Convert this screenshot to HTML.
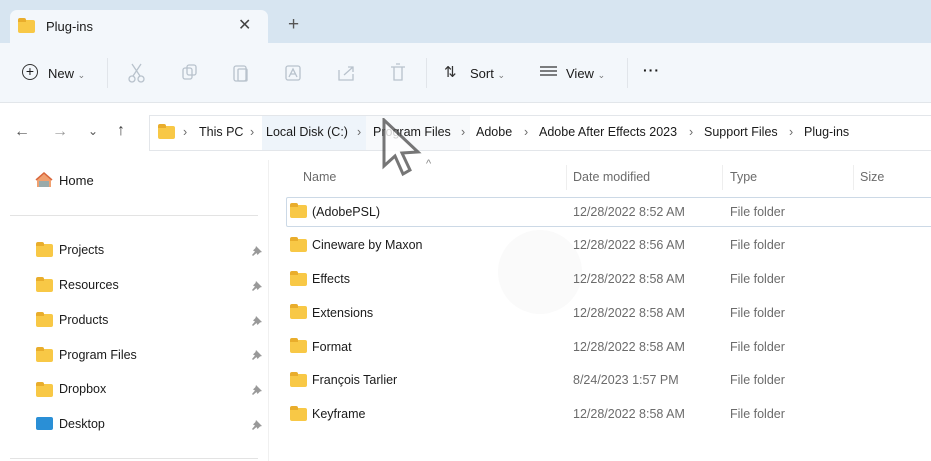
<!DOCTYPE html>
<html><head><meta charset="utf-8"><style>
*{margin:0;padding:0;box-sizing:border-box}
body{width:931px;height:461px;overflow:hidden;background:#fff;font-family:"Liberation Sans",sans-serif;font-size:12.5px;color:#1a1a1a;position:relative}
.a{position:absolute}
.fold{position:absolute;width:17px;height:13px;background:#f8c846;border-radius:2px}
.fold:before{content:"";position:absolute;left:0;top:-2px;width:8px;height:4px;background:#e9ad2c;border-radius:2px 2px 0 0}
.g{color:#6b6b6b}
.pin{position:absolute;left:251px;width:12px;height:12px}
.bc{position:absolute;top:125px}
.ch{position:absolute;top:125px;color:#6b6b6b}
</style></head><body>
<div class="a" style="left:0;top:0;width:931px;height:43px;background:#d7e5f1"></div>
<div class="a" style="left:10px;top:10px;width:258px;height:34px;background:#f3f7fb;border-radius:7px 7px 0 0"></div>
<div class="fold" style="left:18px;top:20px"></div>
<div class="a" style="left:46px;top:19px;font-size:13px">Plug-ins</div>
<div class="a" style="left:238px;top:15px;font-size:16px;color:#444">✕</div>
<div class="a" style="left:288px;top:14px;font-size:19px;color:#555">+</div>
<div class="a" style="left:0;top:43px;width:931px;height:60px;background:#f3f7fb;border-bottom:1px solid #e2e6ea"></div>
<div class="a" style="left:22px;top:64px;width:16px;height:16px;border:1.3px solid #333;border-radius:50%;text-align:center;line-height:13px;font-size:14px">+</div>
<div class="a" style="left:48px;top:66px;font-size:13px">New <span style="font-size:9px;color:#777">⌄</span></div>
<div class="a" style="left:107px;top:58px;width:1px;height:30px;background:#e1e5ea"></div>
<svg class="a" style="left:120px;top:60px" width="300" height="26" fill="none" stroke="#b8c2cc" stroke-width="1.3">
<circle cx="12" cy="19" r="3"/><circle cx="21" cy="19" r="3"/><path d="M13 16 L21 4 M20 16 L12 4"/>
<rect x="63" y="8" width="9" height="11" rx="2"/><rect x="67" y="5" width="9" height="10" rx="2"/>
<rect x="114" y="6" width="12" height="15" rx="2"/><rect x="118" y="9" width="9" height="12" rx="1"/>
<rect x="166" y="6" width="14" height="14" rx="2"/><path d="M169 17 L173 9 L177 17 M170 14 H176"/>
<path d="M219 10 V20 H233 V14 M224 15 L233 7 M228 7 H233 V12"/>
<path d="M271 7 H285 M274 7 V20 H282 V7 M276 4 H280"/>
</svg>
<div class="a" style="left:426px;top:58px;width:1px;height:30px;background:#e1e5ea"></div>
<div class="a" style="left:444px;top:63px;font-size:15px;color:#333">⇅</div>
<div class="a" style="left:470px;top:66px;font-size:13px">Sort <span style="font-size:9px;color:#777">⌄</span></div>
<svg class="a" style="left:540px;top:66px" width="18" height="12" stroke="#333" stroke-width="1.2"><path d="M0 1H17M0 5H17M0 9H17"/></svg>
<div class="a" style="left:566px;top:66px;font-size:13px">View <span style="font-size:9px;color:#777">⌄</span></div>
<div class="a" style="left:627px;top:58px;width:1px;height:30px;background:#e1e5ea"></div>
<div class="a" style="left:643px;top:62px;font-size:14px;font-weight:bold;letter-spacing:1px">···</div>
<div class="a" style="left:14px;top:123px;font-size:16px;color:#555">←</div>
<div class="a" style="left:52px;top:123px;font-size:16px;color:#999">→</div>
<div class="a" style="left:88px;top:124px;font-size:12px;color:#555">⌄</div>
<div class="a" style="left:117px;top:122px;font-size:16px;color:#444">↑</div>
<div class="a" style="left:149px;top:115px;width:790px;height:36px;border:1px solid #e3e6ea;background:#fff"></div>
<div class="a" style="left:262px;top:116px;width:104px;height:34px;background:#eef4fa"></div>
<div class="a" style="left:366px;top:116px;width:104px;height:34px;background:#f7f9fb"></div>
<div class="fold" style="left:158px;top:126px"></div>
<span class="ch" style="left:183px">›</span><span class="bc" style="left:199px">This PC</span>
<span class="ch" style="left:250px">›</span><span class="bc" style="left:266px">Local Disk (C:)</span>
<span class="ch" style="left:357px">›</span><span class="bc" style="left:373px">Program Files</span>
<span class="ch" style="left:461px">›</span><span class="bc" style="left:476px">Adobe</span>
<span class="ch" style="left:524px">›</span><span class="bc" style="left:539px">Adobe After Effects 2023</span>
<span class="ch" style="left:689px">›</span><span class="bc" style="left:704px">Support Files</span>
<span class="ch" style="left:789px">›</span><span class="bc" style="left:804px">Plug-ins</span>
<svg class="a" style="left:380px;top:118px" width="45" height="65"><path d="M4 2 L4 48 L15 38 L23 56 L30 52 L22 35 L38 34 Z" fill="#fff" stroke="#555" stroke-width="3" opacity=".8"/></svg>
<svg class="a" style="left:35px;top:172px" width="18" height="16"><path d="M2 8 L9 2 L16 8 V15 H2 Z" fill="#f0a070"/><path d="M1 8 L9 1 L17 8" stroke="#d9663a" stroke-width="1.5" fill="none"/><rect x="4" y="9" width="10" height="6" fill="#9aa"/></svg>
<div class="a" style="left:59px;top:173px;font-size:13px">Home</div>
<div class="a" style="left:10px;top:215px;width:248px;height:1px;background:#e3e3e3"></div>
<div class="a" style="left:10px;top:458px;width:248px;height:1px;background:#e3e3e3"></div>
<div class="a" style="left:268px;top:160px;width:1px;height:301px;background:#f0f0f0"></div>
<svg width="0" height="0"><defs><symbol id="p" viewBox="0 0 12 12"><path d="M5 1 L11 7 L9 7.5 L6.5 10 L5.5 8 L2 11 L1 10 L4 6.5 L2 5.5 L4.5 3 Z" fill="#999"/></symbol></defs></svg>
<div class="fold" style="left:36px;top:244px"></div><div class="a" style="left:59px;top:243px">Projects</div><svg class="pin" style="top:245px"><use href="#p"/></svg>
<div class="fold" style="left:36px;top:279px"></div><div class="a" style="left:59px;top:278px">Resources</div><svg class="pin" style="top:280px"><use href="#p"/></svg>
<div class="fold" style="left:36px;top:314px"></div><div class="a" style="left:59px;top:313px">Products</div><svg class="pin" style="top:315px"><use href="#p"/></svg>
<div class="fold" style="left:36px;top:349px"></div><div class="a" style="left:59px;top:348px">Program Files</div><svg class="pin" style="top:349px"><use href="#p"/></svg>
<div class="fold" style="left:36px;top:384px"></div><div class="a" style="left:59px;top:382px">Dropbox</div><svg class="pin" style="top:384px"><use href="#p"/></svg>
<div class="a" style="left:36px;top:417px;width:17px;height:13px;background:#2a8fd6;border-radius:2px"></div><div class="a" style="left:59px;top:417px">Desktop</div><svg class="pin" style="top:419px"><use href="#p"/></svg>
<div class="a g" style="left:303px;top:170px">Name</div>
<div class="a" style="left:426px;top:158px;font-size:11px;color:#888">^</div>
<div class="a" style="left:566px;top:165px;width:1px;height:25px;background:#eee"></div>
<div class="a g" style="left:573px;top:170px">Date modified</div>
<div class="a" style="left:722px;top:165px;width:1px;height:25px;background:#eee"></div>
<div class="a g" style="left:730px;top:170px">Type</div>
<div class="a" style="left:853px;top:165px;width:1px;height:25px;background:#eee"></div>
<div class="a g" style="left:860px;top:170px">Size</div>
<div class="a" style="left:286px;top:197px;width:650px;height:30px;border:1px solid #ccd9e6;border-radius:2px"></div>
<div class="a" style="left:498px;top:230px;width:84px;height:84px;border-radius:50%;background:#fafafa"></div>
<div class="fold" style="left:290px;top:205px"></div><div class="a" style="left:312px;top:205px">(AdobePSL)</div><div class="a g" style="left:573px;top:205px">12/28/2022 8:52 AM</div><div class="a g" style="left:730px;top:205px">File folder</div>
<div class="fold" style="left:290px;top:239px"></div><div class="a" style="left:312px;top:238px">Cineware by Maxon</div><div class="a g" style="left:573px;top:238px">12/28/2022 8:56 AM</div><div class="a g" style="left:730px;top:238px">File folder</div>
<div class="fold" style="left:290px;top:273px"></div><div class="a" style="left:312px;top:272px">Effects</div><div class="a g" style="left:573px;top:272px">12/28/2022 8:58 AM</div><div class="a g" style="left:730px;top:272px">File folder</div>
<div class="fold" style="left:290px;top:306px"></div><div class="a" style="left:312px;top:306px">Extensions</div><div class="a g" style="left:573px;top:306px">12/28/2022 8:58 AM</div><div class="a g" style="left:730px;top:306px">File folder</div>
<div class="fold" style="left:290px;top:340px"></div><div class="a" style="left:312px;top:340px">Format</div><div class="a g" style="left:573px;top:340px">12/28/2022 8:58 AM</div><div class="a g" style="left:730px;top:340px">File folder</div>
<div class="fold" style="left:290px;top:374px"></div><div class="a" style="left:312px;top:373px">François Tarlier</div><div class="a g" style="left:573px;top:373px">8/24/2023 1:57 PM</div><div class="a g" style="left:730px;top:373px">File folder</div>
<div class="fold" style="left:290px;top:408px"></div><div class="a" style="left:312px;top:407px">Keyframe</div><div class="a g" style="left:573px;top:407px">12/28/2022 8:58 AM</div><div class="a g" style="left:730px;top:407px">File folder</div>
</body></html>
